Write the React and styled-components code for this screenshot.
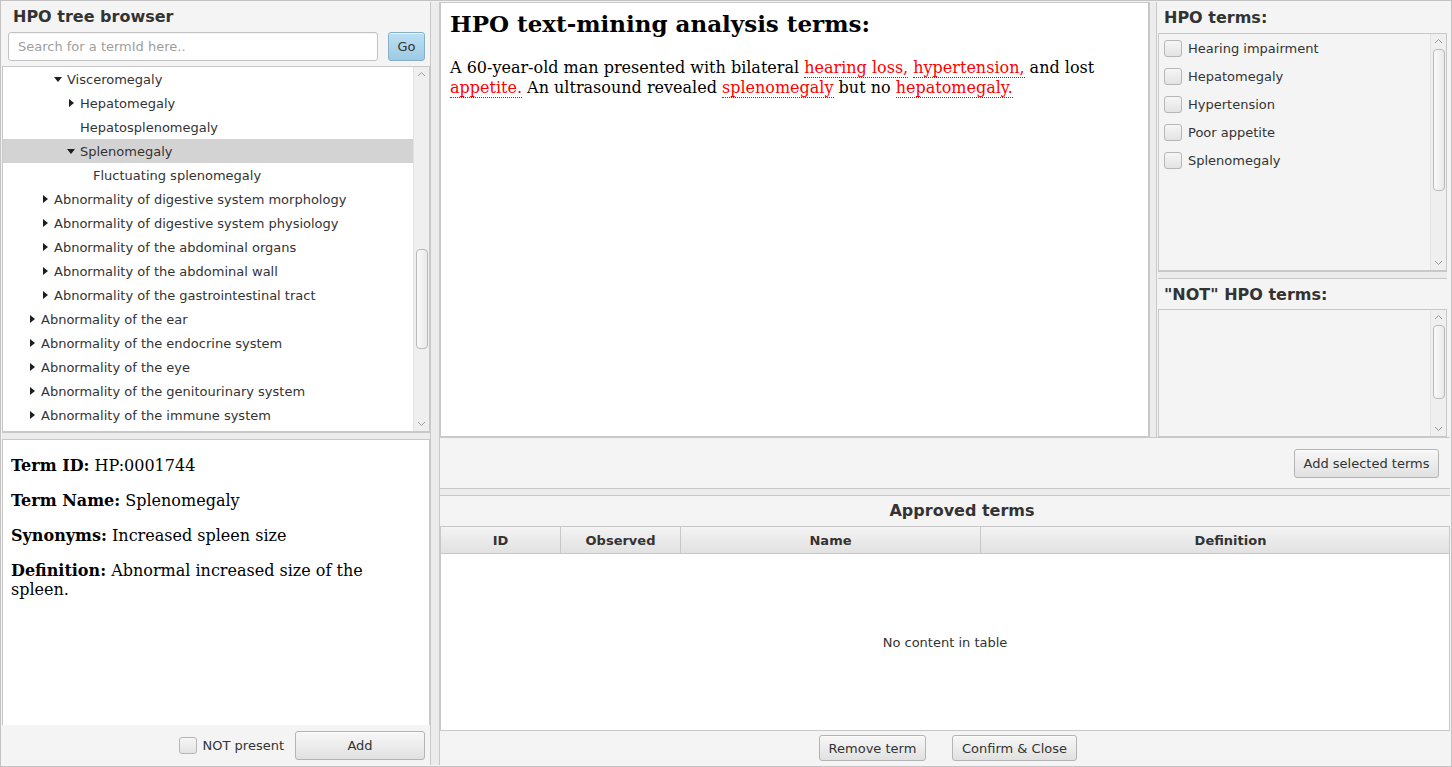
import React from 'react';
import styled, { createGlobalStyle } from 'styled-components';

const Global = createGlobalStyle`
  html, body { margin: 0; padding: 0; background: #f4f4f4; }
  body { font-family: "DejaVu Sans", "Noto Sans", sans-serif; font-size: 13px; color: #333; }
  * { box-sizing: border-box; }
`;

const LINE = '#c8c8c8';

const Window = styled.div`
  display: flex;
  width: 1452px;
  height: 767px;
  border: 1px solid #c3c3c3;
  padding: 1px;
  background: #f4f4f4;
  overflow: hidden;
`;

const LeftColumn = styled.div`
  width: 428px;
  flex: none;
  display: flex;
  flex-direction: column;
`;

const BrowserHeader = styled.div`
  display: flex;
  flex-direction: column;
  gap: 5px;
  padding: 5px 5px 5px 6px;
  height: 64px;
`;

const PaneTitle = styled.div`
  font-weight: bold;
  font-size: 16px;
  line-height: 20px;
  color: #333;
  padding-left: ${p => p.$indent || 0}px;
  white-space: nowrap;
`;

const SearchRow = styled.div`
  display: flex;
  gap: 10px;
  height: 29px;
`;

const SearchInput = styled.input`
  flex: 1;
  min-width: 0;
  height: 29px;
  border: 1px solid #c2c2c2;
  border-radius: 3px;
  padding: 0 9px;
  font: 13px "DejaVu Sans", sans-serif;
  color: #333;
  background: #fff;
  box-shadow: inset 0 1px 1px rgba(0,0,0,0.04);
  outline: none;
  &::placeholder { color: #9e9e9e; }
`;

const Button = styled.button`
  height: ${p => p.$h || 29}px;
  width: ${p => p.$w ? `${p.$w}px` : 'auto'};
  padding: 0 ${p => p.$px ?? 8}px;
  border: 1px solid ${p => p.$primary ? '#86afc9' : '#b4b4b4'};
  border-radius: 3px;
  background: ${p => p.$primary
    ? 'linear-gradient(#bde0f3, #9ccae4)'
    : 'linear-gradient(#f7f7f7, #e1e1e1)'};
  box-shadow: inset 0 1px 0 rgba(255,255,255,0.7);
  font: 13px "DejaVu Sans", sans-serif;
  color: #333;
  flex: none;
  cursor: default;
`;

const TreeView = styled.div`
  height: 366px;
  flex: none;
  display: flex;
  background: #fff;
  border: 1px solid ${LINE};
`;

const TreeRows = styled.div`
  flex: 1;
  overflow: hidden;
`;

const TreeRow = styled.div`
  height: 24px;
  display: flex;
  align-items: center;
  padding-left: ${p => 20 + 13 * p.$level}px;
  background: ${p => p.$selected ? '#d3d3d3' : 'transparent'};
  white-space: nowrap;
  color: #333;
`;

const Disclosure = styled.span`
  width: 18px;
  flex: none;
  display: flex;
  justify-content: center;
  align-items: center;
  &::before {
    content: '';
    display: ${p => p.$kind === 'leaf' ? 'none' : 'block'};
    border-style: solid;
    ${p => p.$kind === 'open'
      ? 'border-width: 5px 4px 0 4px; border-color: #1e1e1e transparent transparent transparent;'
      : 'border-width: 4px 0 4px 5px; border-color: transparent transparent transparent #1e1e1e;'}
  }
`;

const ScrollTrack = styled.div`
  width: 16px;
  flex: none;
  display: flex;
  flex-direction: column;
  align-items: center;
  background: #efefef;
  border-left: 1px solid #e2e2e2;
`;

const ScrollArrow = styled.div`
  height: 14px;
  flex: none;
  display: flex;
  align-items: center;
  justify-content: center;
`;

const ScrollThumb = styled.div`
  width: 12px;
  height: ${p => p.$h}px;
  margin-top: ${p => p.$top}px;
  flex: none;
  border: 1px solid #b9b9b9;
  border-radius: 4px;
  background: linear-gradient(to right, #fafafa, #e9e9e9);
`;

const Spacer = styled.div`
  flex: 1;
`;

const SplitBarH = styled.div`
  height: 8px;
  flex: none;
  background: #ececec;
  border-top: 1px solid ${LINE};
  border-bottom: 1px solid ${LINE};
`;

const SplitBarV = styled.div`
  width: ${p => p.$w || 8}px;
  flex: none;
  background: #ececec;
  border-left: 1px solid ${LINE};
  border-right: 1px solid ${LINE};
`;

const DetailView = styled.div`
  flex: 1;
  background: #fff;
  border-left: 1px solid ${LINE};
  border-right: 1px solid ${LINE};
  padding: 0 8px;
  font-family: "DejaVu Serif", serif;
  font-size: 16px;
  line-height: 19px;
  color: #000;
  overflow: hidden;
`;

const DetailPara = styled.p`
  margin: 16px 0;
`;

const DetailFooter = styled.div`
  height: 40px;
  flex: none;
  display: flex;
  align-items: center;
  justify-content: flex-end;
  padding: 0 5px;
  gap: 11px;
`;

const CheckLabel = styled.label`
  display: flex;
  align-items: center;
  gap: ${p => p.$gap || 6}px;
  color: #333;
  white-space: nowrap;
`;

const CheckBox = styled.span`
  width: 18px;
  height: 17px;
  flex: none;
  border: 1px solid #b6b6b6;
  border-radius: 3px;
  background: linear-gradient(#f6f6f6, #e3e3e3);
`;

const RightPart = styled.div`
  flex: 1;
  min-width: 0;
  display: flex;
  flex-direction: column;
`;

const TopRow = styled.div`
  height: 435px;
  flex: none;
  display: flex;
`;

const WebPane = styled.div`
  width: 709px;
  flex: none;
  background: #fff;
  border: 1px solid ${LINE};
  padding: 7px 9px;
  font-family: "DejaVu Serif", serif;
  color: #000;
  overflow: hidden;
`;

const WebHeading = styled.h2`
  margin: 0;
  font-size: 23px;
  line-height: 28px;
  font-weight: bold;
`;

const WebText = styled.p`
  margin: 20px 0 0;
  font-size: 16px;
  line-height: 20px;
`;

const Mined = styled.span`
  color: #ff0000;
  border-bottom: 1px dotted #444;
`;

const TermsColumn = styled.div`
  flex: 1;
  min-width: 0;
  display: flex;
  flex-direction: column;
  padding: 0 3px 0 1px;
`;

const TermsSection = styled.div`
  height: ${p => p.$h}px;
  flex: none;
  display: flex;
  flex-direction: column;
`;

const TermsTitle = styled.div`
  height: ${p => p.$h}px;
  flex: none;
  display: flex;
  align-items: center;
  padding-left: 6px;
  font-weight: bold;
  font-size: 16px;
  color: #333;
  white-space: nowrap;
`;

const ListBox = styled.div`
  flex: 1;
  display: flex;
  border: 1px solid ${LINE};
  background: #f4f4f4;
  min-height: 0;
`;

const ListItems = styled.div`
  flex: 1;
  padding-left: 5px;
`;

const ListItem = styled.div`
  height: 28px;
  display: flex;
  align-items: center;
`;

const ButtonBar = styled.div`
  height: 51px;
  flex: none;
  display: flex;
  align-items: center;
  justify-content: flex-end;
  padding-right: ${p => p.$pr || 0}px;
  border-top: 1px solid ${LINE};
`;

const BottomSection = styled.div`
  flex: 1;
  display: flex;
  flex-direction: column;
  min-height: 0;
`;

const SectionTitleBar = styled.div`
  height: 30px;
  flex: none;
  display: flex;
  align-items: center;
  justify-content: center;
  padding-left: 34px;
`;

const Table = styled.div`
  flex: 1;
  display: flex;
  flex-direction: column;
  border: 1px solid ${LINE};
  background: #fff;
  min-height: 0;
  overflow: hidden;
`;

const TableHeader = styled.div`
  height: 27px;
  flex: none;
  display: flex;
  background: linear-gradient(#f3f3f3, #e2e2e2);
  border-bottom: 1px solid ${LINE};
`;

const HeaderCell = styled.div`
  width: ${p => p.$w}px;
  flex: none;
  display: flex;
  align-items: center;
  justify-content: center;
  font-weight: bold;
  color: #333;
  border-right: 1px solid ${LINE};
`;

const TableBody = styled.div`
  flex: 1;
  display: flex;
  align-items: center;
  justify-content: center;
  color: #333;
`;

const TableFooter = styled.div`
  height: 34px;
  flex: none;
  display: flex;
  align-items: center;
  justify-content: center;
  gap: 26px;
  padding-left: 6px;
`;

const Chevron = ({ up }) => (
  <svg width="9" height="6" viewBox="0 0 9 6">
    <polyline
      points={up ? '1,5 4.5,1.5 8,5' : '1,1 4.5,4.5 8,1'}
      fill="none"
      stroke="#9a9a9a"
      strokeWidth="1"
    />
  </svg>
);

const ScrollBar = ({ top, h }) => (
  <ScrollTrack>
    <ScrollArrow><Chevron up /></ScrollArrow>
    <ScrollThumb $top={top} $h={h} />
    <Spacer />
    <ScrollArrow><Chevron /></ScrollArrow>
  </ScrollTrack>
);

const treeItems = [
  { level: 2, kind: 'open', label: 'Visceromegaly' },
  { level: 3, kind: 'closed', label: 'Hepatomegaly' },
  { level: 3, kind: 'leaf', label: 'Hepatosplenomegaly' },
  { level: 3, kind: 'open', label: 'Splenomegaly', selected: true },
  { level: 4, kind: 'leaf', label: 'Fluctuating splenomegaly' },
  { level: 1, kind: 'closed', label: 'Abnormality of digestive system morphology' },
  { level: 1, kind: 'closed', label: 'Abnormality of digestive system physiology' },
  { level: 1, kind: 'closed', label: 'Abnormality of the abdominal organs' },
  { level: 1, kind: 'closed', label: 'Abnormality of the abdominal wall' },
  { level: 1, kind: 'closed', label: 'Abnormality of the gastrointestinal tract' },
  { level: 0, kind: 'closed', label: 'Abnormality of the ear' },
  { level: 0, kind: 'closed', label: 'Abnormality of the endocrine system' },
  { level: 0, kind: 'closed', label: 'Abnormality of the eye' },
  { level: 0, kind: 'closed', label: 'Abnormality of the genitourinary system' },
  { level: 0, kind: 'closed', label: 'Abnormality of the immune system' },
];

const hpoTerms = ['Hearing impairment', 'Hepatomegaly', 'Hypertension', 'Poor appetite', 'Splenomegaly'];

const columns = [
  { name: 'ID', w: 120 },
  { name: 'Observed', w: 120 },
  { name: 'Name', w: 300 },
  { name: 'Definition', w: 500 },
];

export default function App() {
  return (
    <>
      <Global />
      <Window>
        <LeftColumn>
          <BrowserHeader>
            <PaneTitle $indent={5}>HPO tree browser</PaneTitle>
            <SearchRow>
              <SearchInput placeholder="Search for a termId here.." />
              <Button $primary $w={37} $px={0}>Go</Button>
            </SearchRow>
          </BrowserHeader>
          <TreeView>
            <TreeRows>
              {treeItems.map((it, i) => (
                <TreeRow key={i} $level={it.level} $selected={it.selected}>
                  <Disclosure $kind={it.kind} />
                  {it.label}
                </TreeRow>
              ))}
            </TreeRows>
            <ScrollBar top={168} h={100} />
          </TreeView>
          <SplitBarH />
          <DetailView>
            <DetailPara><b>Term ID:</b> HP:0001744</DetailPara>
            <DetailPara><b>Term Name:</b> Splenomegaly</DetailPara>
            <DetailPara><b>Synonyms:</b> Increased spleen size</DetailPara>
            <DetailPara><b>Definition:</b> Abnormal increased size of the spleen.</DetailPara>
          </DetailView>
          <DetailFooter>
            <CheckLabel>
              <CheckBox />
              NOT present
            </CheckLabel>
            <Button $w={130}>Add</Button>
          </DetailFooter>
        </LeftColumn>

        <SplitBarV $w={10} />

        <RightPart>
          <TopRow>
            <WebPane>
              <WebHeading>HPO text-mining analysis terms:</WebHeading>
              <WebText>
                A 60-year-old man presented with bilateral <Mined>hearing loss,</Mined>{' '}
                <Mined>hypertension,</Mined> and lost <Mined>appetite.</Mined> An ultrasound
                revealed <Mined>splenomegaly</Mined> but no <Mined>hepatomegaly.</Mined>
              </WebText>
            </WebPane>
            <SplitBarV $w={8} />
            <TermsColumn>
              <TermsSection $h={269}>
                <TermsTitle $h={31}>HPO terms:</TermsTitle>
                <ListBox>
                  <ListItems>
                    {hpoTerms.map(t => (
                      <ListItem key={t}>
                        <CheckLabel $gap={6}>
                          <CheckBox />
                          {t}
                        </CheckLabel>
                      </ListItem>
                    ))}
                  </ListItems>
                  <ScrollBar top={1} h={142} />
                </ListBox>
              </TermsSection>
              <SplitBarH />
              <TermsSection $h={158}>
                <TermsTitle $h={30}>"NOT" HPO terms:</TermsTitle>
                <ListBox>
                  <ListItems />
                  <ScrollBar top={1} h={74} />
                </ListBox>
              </TermsSection>
            </TermsColumn>
          </TopRow>
          <ButtonBar $pr={11}>
            <Button $w={145}>Add selected terms</Button>
          </ButtonBar>
          <SplitBarH />
          <BottomSection>
            <SectionTitleBar>
              <PaneTitle>Approved terms</PaneTitle>
            </SectionTitleBar>
            <Table>
              <TableHeader>
                {columns.map(c => (
                  <HeaderCell key={c.name} $w={c.w}>{c.name}</HeaderCell>
                ))}
              </TableHeader>
              <TableBody>No content in table</TableBody>
            </Table>
            <TableFooter>
              <Button $h={26} $w={107}>Remove term</Button>
              <Button $h={26} $w={125}>Confirm &amp; Close</Button>
            </TableFooter>
          </BottomSection>
        </RightPart>
      </Window>
    </>
  );
}
